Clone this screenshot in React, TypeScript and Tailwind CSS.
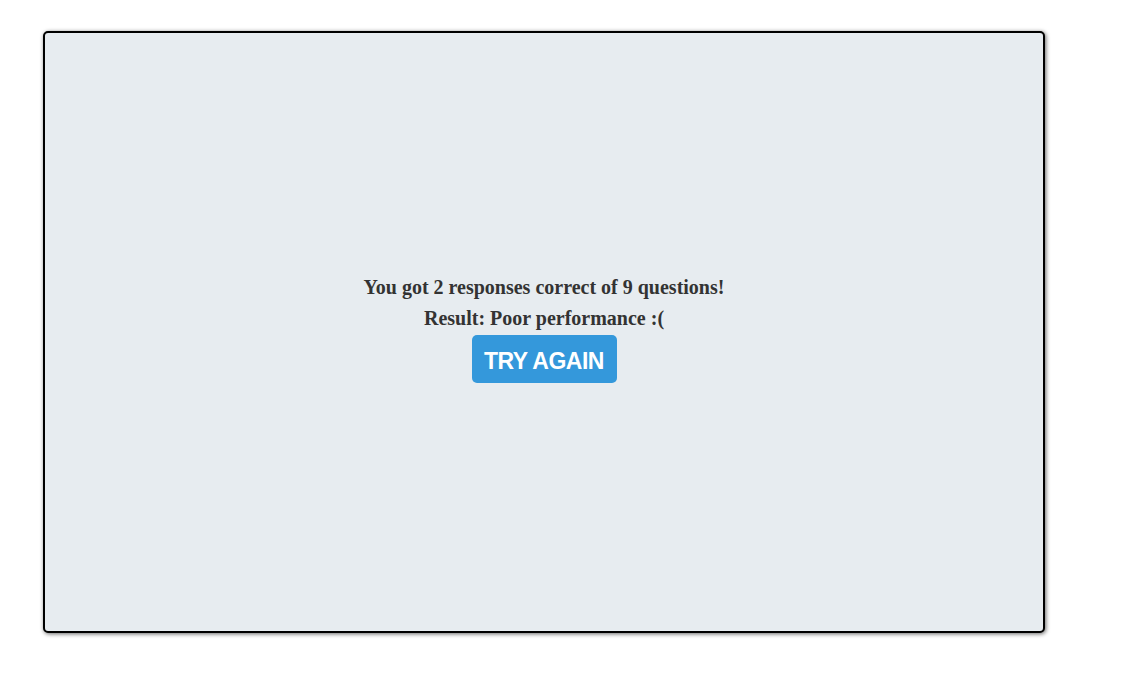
export default function App() {
  return (
    <div className="min-h-[675px] bg-white pt-[31px] pl-[43px]">
      <div className="flex h-[602px] w-[1002px] flex-col items-center justify-center rounded-[5px] border-2 border-black bg-[#e7ecf0] shadow-[1px_1px_4px_rgba(0,0,0,0.6)]">
        <p className="text-[20px] font-bold leading-[31px] text-[#333] [font-family:'Liberation_Serif',serif]">
          You got 2 responses correct of 9 questions!
        </p>
        <p className="text-[20px] font-bold leading-[31px] text-[#333] [font-family:'Liberation_Serif',serif]">
          Result: Poor performance :(
        </p>
        <button className="mt-px mb-[9px] h-[48px] w-[145px] rounded-[5px] bg-[#3498db] pt-[5px] text-[23px] font-bold tracking-[-0.5px] text-white [font-family:'Liberation_Sans',sans-serif]">
          TRY AGAIN
        </button>
      </div>
    </div>
  );
}
